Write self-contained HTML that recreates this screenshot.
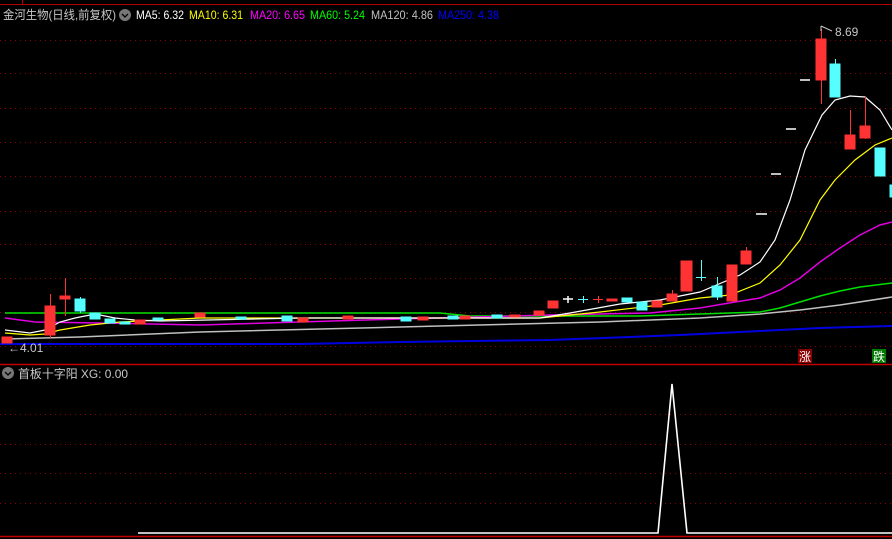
<!DOCTYPE html>
<html><head><meta charset="utf-8"><style>
html,body{margin:0;padding:0;background:#000;width:892px;height:539px;overflow:hidden}
svg{display:block}
text{font-family:"Liberation Sans","Noto Sans CJK SC",sans-serif}
</style></head><body>
<svg width="892" height="539" viewBox="0 0 892 539" xmlns="http://www.w3.org/2000/svg">
<g stroke="#8a0000" stroke-width="1" stroke-dasharray="1,4">
<path d="M0 40.5H892M0 73.5H892M0 108.5H892M0 142.5H892M0 176.5H892M0 211.5H892M0 244.5H892M0 278.5H892M0 312.5H892M0 346.5H892"/>
<path d="M0 414.5H892M0 444.5H892M0 473.5H892M0 503.5H892"/>
</g>
<path d="M0 4.5H892M22.5 0V5" stroke="#b00000"/>
<path d="M0 364.5H892" stroke="#c00000" stroke-width="1.5"/>
<path d="M0 536.5H892" stroke="#c00000" stroke-width="1.5"/>
<text x="3" y="19" font-size="12" fill="#c8c8c8" textLength="113" lengthAdjust="spacingAndGlyphs">金河生物(日线,前复权)</text>
<circle cx="125" cy="15" r="6" fill="#777"/><path d="M122 14l3 3 3-3" stroke="#000" fill="none" stroke-width="1.3"/>
<text x="136" y="19" font-size="12" fill="#fff" textLength="48" lengthAdjust="spacingAndGlyphs">MA5: 6.32</text>
<text x="189" y="19" font-size="12" fill="#ff0" textLength="54" lengthAdjust="spacingAndGlyphs">MA10: 6.31</text>
<text x="250" y="19" font-size="12" fill="#f0f" textLength="55" lengthAdjust="spacingAndGlyphs">MA20: 6.65</text>
<text x="310" y="19" font-size="12" fill="#0f0" textLength="55" lengthAdjust="spacingAndGlyphs">MA60: 5.24</text>
<text x="371" y="19" font-size="12" fill="#c0c0c0" textLength="62" lengthAdjust="spacingAndGlyphs">MA120: 4.86</text>
<text x="438" y="19" font-size="12" fill="#0000ff" textLength="61" lengthAdjust="spacingAndGlyphs">MA250: 4.38</text>
<polyline fill="none" stroke="#0000e0" stroke-width="2" points="0,344 300,344 400,342 550,340 680,335 760,331 820,328 892,326"/>
<polyline fill="none" stroke="#c0c0c0" stroke-width="1.5" points="5,339 80,337 200,332 400,327 600,322 700,318 760,314 800,310 840,305 892,297"/>
<polyline fill="none" stroke="#00e000" stroke-width="1.5" points="5,313 300,313 440,313 470,316 640,316 730,313 760,312 780,308 800,302 820,296 840,291 860,287 892,283"/>
<polyline fill="none" stroke="#e000e0" stroke-width="1.5" points="5,318 20,320 35,322 100,323 200,325 400,319 550,315 650,313 700,308 735,302 760,298 780,290 800,278 820,262 840,248 860,235 880,225 892,222"/>
<polyline fill="none" stroke="#ffff00" stroke-width="1.2" points="5,333 30,335 45,334 60,330 90,325 120,322 200,318 400,318 540,318 600,312 660,305 700,298 730,295 760,283 780,265 800,240 820,200 835,180 855,160 875,145 892,138"/>
<polyline fill="none" stroke="#fff" stroke-width="1.2" points="5,330 30,333 45,330 60,322 75,318 95,314 115,318 135,320 160,321 300,318 540,318 570,313 620,304 660,300 700,292 740,275 760,262 775,240 790,200 805,150 822,115 835,100 850,96 865,97 880,110 892,130"/>
<g fill="#ff3333" stroke="#ff3333">
<rect x="2" y="337" width="10" height="6"/>
<path d="M50.5 294V338"/><rect x="45" y="306" width="10" height="29"/>
<path d="M65.5 278V316"/><rect x="60" y="296" width="10" height="3"/>
<rect x="135" y="320" width="10" height="4"/><rect x="195" y="313" width="10" height="4"/>
<rect x="298" y="318" width="10" height="4"/><rect x="343" y="316" width="10" height="3"/>
<rect x="418" y="317" width="10" height="3"/><rect x="460" y="316" width="10" height="3"/>
<rect x="510" y="315" width="10" height="2"/><rect x="534" y="311" width="10" height="4"/>
<rect x="548" y="301" width="10" height="7"/>
<path d="M593 299.5H603M598.5 296V303"/>
<rect x="607" y="299" width="10" height="2"/>
<rect x="652" y="301" width="10" height="6"/>
<path d="M672.5 290V301"/><rect x="667" y="294" width="10" height="7"/>
<rect x="681" y="261" width="11" height="30"/>
<rect x="727" y="265" width="10" height="36"/>
<path d="M746.5 247V264"/><rect x="741" y="251" width="10" height="13"/>
<path d="M821.5 29V104"/><rect x="816" y="39" width="10" height="41"/>
<path d="M850.5 110V135"/><rect x="845" y="135" width="10" height="14"/>
<path d="M865.5 97V139"/><rect x="860" y="126" width="10" height="12"/>
</g>
<g fill="#55ffff" stroke="#55ffff">
<path d="M80.5 297V313"/><rect x="75" y="299" width="10" height="12"/>
<rect x="90" y="313" width="10" height="6"/><rect x="105" y="319" width="10" height="4"/>
<rect x="120" y="322" width="10" height="2"/>
<rect x="153" y="318" width="10" height="2"/><rect x="236" y="317" width="10" height="2"/>
<rect x="282" y="316" width="10" height="5"/><rect x="401" y="317" width="10" height="4"/>
<rect x="448" y="316" width="10" height="3"/><rect x="492" y="315" width="10" height="3"/>
<path d="M578 299.5H588M583.5 296V303"/>
<rect x="622" y="298" width="10" height="4"/>
<rect x="637" y="302" width="10" height="8"/>
<path d="M696 277.5H706M701.5 260V281"/>
<path d="M717.5 277V300"/><rect x="712" y="286" width="10" height="11"/>
<path d="M835.5 59V64"/><rect x="830" y="64" width="10" height="33"/>
<rect x="875" y="148" width="10" height="28"/>
<rect x="890" y="185" width="4" height="12"/>
</g>
<g stroke="#fff" stroke-width="1.5">
<path d="M756 214H767M771 174H781M786 129H796M800 80H810M563 299H573M568 296V303"/>
</g>
<text x="835" y="36" font-size="12" fill="#c8c8c8">8.69</text>
<path d="M821 26V31M821 26L832 31" stroke="#c8c8c8" fill="none"/>
<text x="8" y="352" font-size="12" fill="#c8c8c8">←4.01</text>
<rect x="798" y="349" width="14" height="14" fill="#8a0000"/>
<text x="799" y="361" font-size="12" fill="#fff">涨</text>
<rect x="872" y="349" width="14" height="14" fill="#007a00"/>
<text x="873" y="361" font-size="12" fill="#fff">跌</text>
<circle cx="8" cy="373" r="6" fill="#777"/><path d="M5 372l3 3 3-3" stroke="#000" fill="none" stroke-width="1.3"/>
<text x="18" y="378" font-size="12" fill="#c8c8c8" textLength="110" lengthAdjust="spacingAndGlyphs">首板十字阳 XG: 0.00</text>
<polyline fill="none" stroke="#fff" stroke-width="1.6" points="138,533 658,533 672,384 687,533 892,533"/>
</svg>
</body></html>
